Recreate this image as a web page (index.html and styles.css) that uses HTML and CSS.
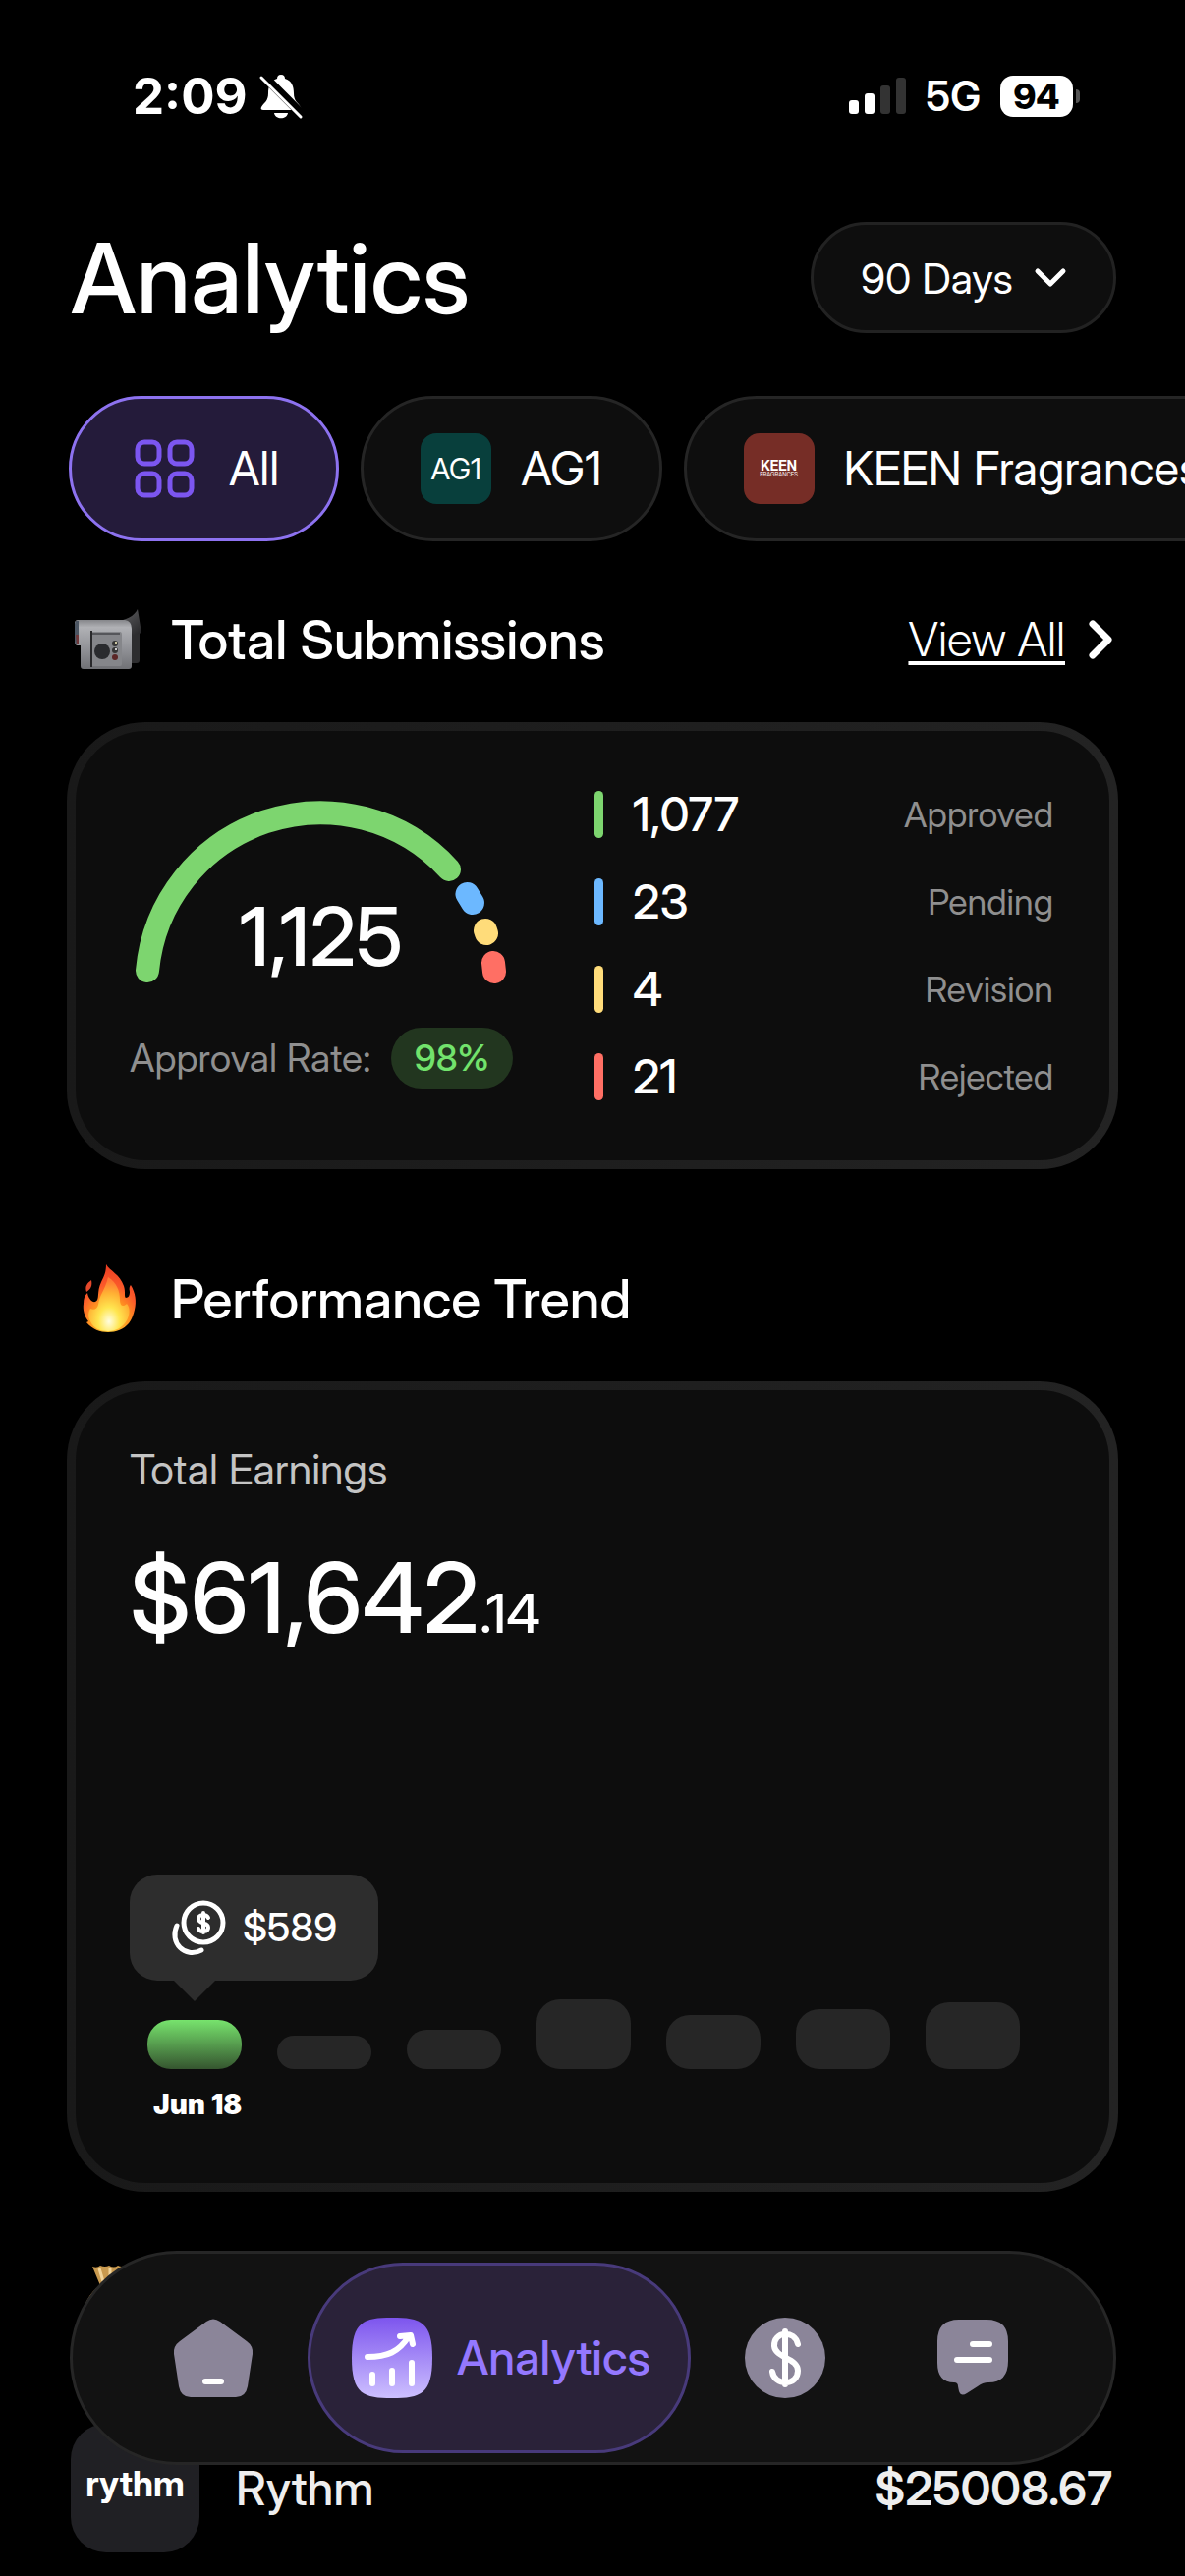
FILE: index.html
```html
<!DOCTYPE html>
<html lang="en">
<head>
<meta charset="utf-8">
<title>Analytics</title>
<meta name="viewport" content="width=device-width, initial-scale=1">
<link rel="stylesheet" href="styles.css">
</head>
<body>
<div class="status">
  <div class="status-group">
    <span class="clock">2:09</span>
    <svg class="bell" viewBox="0 0 44 46" aria-hidden="true">
      <path d="M22 1c3 0 4 2 4 4 7 2 9 8 9 15 0 8 4 9 7 14 1 2 0 3-2 3H4c-2 0-3-1-2-3 3-5 7-6 7-14 0-7 2-13 9-15 0-2 1-4 4-4z" fill="#fff"/>
      <path d="M15 40h14c-1 7-13 7-14 0z" fill="#fff"/>
      <path d="M3 1L44 42" stroke="#000" stroke-width="9"/>
      <path d="M2 4L42 44" stroke="#fff" stroke-width="3" stroke-linecap="round"/>
    </svg>
  </div>
  <div class="status-group status-right">
    <svg class="signal" viewBox="0 0 58 38" aria-hidden="true">
      <rect x="0" y="23" width="10" height="14" rx="3" fill="#fff"/>
      <rect x="16" y="16" width="10" height="21" rx="3" fill="#fff"/>
      <rect x="32" y="8" width="10" height="29" rx="3" fill="#333"/>
      <rect x="48" y="0" width="10" height="37" rx="3" fill="#333"/>
    </svg>
    <span class="network">5G</span>
    <span class="battery"><span class="battery-body">94</span><span class="battery-tip"></span></span>
  </div>
</div>

<main class="page">
  <header class="title-row">
    <h1 class="title">Analytics</h1>
    <button class="range" type="button">90 Days
      <svg class="range-icon" viewBox="0 0 32 20" aria-hidden="true"><path d="M3 3l13 13L29 3" fill="none" stroke="#fff" stroke-width="5" stroke-linecap="round" stroke-linejoin="round"/></svg>
    </button>
  </header>

  <div class="chips">
    <button class="chip chip-active" type="button">
      <svg class="chip-icon" viewBox="0 0 72 72" fill="none" stroke="#7c56f0" stroke-width="5" aria-hidden="true">
        <rect x="9" y="9" width="22" height="22" rx="7"/><rect x="42" y="9" width="22" height="22" rx="7"/>
        <rect x="9" y="41" width="22" height="22" rx="7"/><rect x="42" y="41" width="22" height="22" rx="7"/>
      </svg>All</button>
    <button class="chip" type="button"><span class="chip-icon brand-ag1" aria-hidden="true">AG1</span>AG1</button>
    <button class="chip" type="button"><span class="chip-icon brand-keen" aria-hidden="true"><b>KEEN</b><small>FRAGRANCES</small></span>KEEN Fragrances</button>
  </div>

  <section class="block">
    <div class="heading">
      <svg class="emoji" viewBox="2 0 88 80" aria-hidden="true">
        <defs>
          <linearGradient id="cam" x1="0" y1="0" x2="0" y2="1"><stop offset="0" stop-color="#85868a"/><stop offset=".15" stop-color="#b0b1b5"/><stop offset=".6" stop-color="#909196"/><stop offset="1" stop-color="#707175"/></linearGradient>
          <linearGradient id="hood" x1="0" y1="0" x2="1" y2="1"><stop offset="0" stop-color="#6b6b6e"/><stop offset="1" stop-color="#242426"/></linearGradient>
        </defs>
        <path d="M66 33h10v28q0 3-3 3h-7z" fill="#2d2d2f"/>
        <path d="M48 22c14-1 23-6 26-13l4 24-8 3-6-9z" fill="url(#hood)"/>
        <path d="M13 20h48q7 1 7 9v38q0 3-3 3H19q-3 0-3-3V46h-3q-3 0-3-5V24q0-4 3-4z" fill="url(#cam)"/>
        <path d="M11 21h3v24h-1q-3 0-3-4V24z" fill="#4c5663"/>
        <path d="M11 35h3v10h-2z" fill="#70383a"/>
        <path d="M27 32h29q2 0 2 3v30q0 2-2 2H27z" fill="#85868a"/>
        <path d="M26 31h2v37h-2z" fill="#29292b"/>
        <path d="M28 33h28v2H28z" fill="#55565a"/>
        <circle cx="38" cy="52" r="8" fill="#2a2b2e"/>
        <circle cx="51" cy="44" r="3" fill="#353535"/><circle cx="51" cy="51" r="3" fill="#353535"/><circle cx="51" cy="58" r="3" fill="#5b2626"/>
        <circle cx="52" cy="43" r="1" fill="#fff7c5"/><circle cx="52" cy="50" r="1" fill="#fff"/>
      </svg>
      <h2 class="heading-text">Total Submissions</h2>
      <a class="view-all" href="#submissions"><span class="view-all-text">View All</span>
        <svg class="view-all-icon" viewBox="0 0 24 40" aria-hidden="true"><path d="M4 4l16 16L4 36" fill="none" stroke="#fff" stroke-width="7" stroke-linecap="round" stroke-linejoin="round"/></svg>
      </a>
    </div>
    <div class="card submissions">
      <div class="gauge-col">
        <div class="gauge">
          <svg class="gauge-arc" viewBox="0 0 378 186" fill="none" stroke-width="24" stroke-linecap="round" aria-hidden="true">
            <path d="M12 172A177 177 0 0 1 319 69" stroke="#7dd56f"/>
            <path d="M337.500 94L343 103" stroke="#6cb8ff"/>
            <path d="M356 131L357 134" stroke="#ffdc7a"/>
            <path d="M364 164L365 173" stroke="#ff6f64"/>
          </svg>
          <span class="gauge-value">1,125</span>
        </div>
        <div class="rate">Approval Rate: <span class="rate-pill">98%</span></div>
      </div>
      <dl class="legend">
        <div class="legend-row legend-green"><dt>Approved</dt><dd>1,077</dd></div>
        <div class="legend-row legend-blue"><dt>Pending</dt><dd>23</dd></div>
        <div class="legend-row legend-yellow"><dt>Revision</dt><dd>4</dd></div>
        <div class="legend-row legend-red"><dt>Rejected</dt><dd>21</dd></div>
      </dl>
    </div>
  </section>

  <section class="block">
    <div class="heading">
      <svg class="emoji" viewBox="2 5 88 80" aria-hidden="true">
        <defs>
          <radialGradient id="fire" cx=".5" cy=".9" r=".85"><stop offset="0" stop-color="#ffd23a"/><stop offset=".45" stop-color="#ff9420"/><stop offset=".7" stop-color="#fb5a2a"/><stop offset="1" stop-color="#ee4023"/></radialGradient>
          <radialGradient id="core" cx=".5" cy=".82" r=".75"><stop offset="0" stop-color="#fffde0"/><stop offset=".35" stop-color="#ffe650"/><stop offset=".7" stop-color="#ffb234"/><stop offset="1" stop-color="#ff7a33"/></radialGradient>
        </defs>
        <path d="M42 10c4 7 14 10 18 22 2 6 0 11 2 12 3 0 4-3 4-6-1-4 0-6 1-7 5 8 6 17 4 25-1 5-3 9-4 11l-2 3C60 76 52 79 44 79S28 76 22 69l2-1c-4-5-6-12-5-18 0-5 1-8 4-11 1 6 5 10 8 9 5-2 1-10 6-20 3-6 5-10 5-18z" fill="url(#fire)"/>
        <path d="M27 26c1 5 0 9-5 12-2-6 1-9 5-12z" fill="#e4482b"/>
        <path d="M44 23c9 6 12 14 12 23 0 6 3 8 7 4 4 4 3 12 0 17-4 7-11 11-19 11s-15-3-18-10c-3-5-2-10 0-13 4 2 7 0 8-4 1-10 7-15 10-28z" fill="url(#core)"/>
      </svg>
      <h2 class="heading-text">Performance Trend</h2>
    </div>
    <div class="card trend">
      <p class="trend-label">Total Earnings</p>
      <p class="trend-value">$61,642<span class="trend-cents">.14</span></p>
      <div class="chart">
        <div class="bar bar-active" style="height:50px">
          <div class="tip">
            <svg class="tip-icon" viewBox="0 0 56 56" fill="none" stroke="#fff" stroke-width="5" stroke-linecap="round" aria-hidden="true">
              <circle cx="33" cy="23" r="20"/>
              <path d="M6 26C-2 43 14 60 31 51"/>
              <path d="M38 18c-2-4-10-4-10 1 0 6 10 3 10 9 0 5-9 5-10 1M33 13v20" stroke-width="4"/>
            </svg>$589</div>
          <span class="bar-label">Jun 18</span>
        </div>
        <div class="bar" style="height:34px"></div>
        <div class="bar" style="height:40px"></div>
        <div class="bar" style="height:71px"></div>
        <div class="bar" style="height:55px"></div>
        <div class="bar" style="height:61px"></div>
        <div class="bar" style="height:68px"></div>
      </div>
    </div>
  </section>

  <section class="block earners">
    <svg class="emoji" viewBox="0 0 88 80" aria-hidden="true">
      <path d="M26 12q5 2 8-1 5 2 9 0 5 3 9 0 4 2 7 0L50 36H36z" fill="#c99a4f"/>
      <path d="M33 14l6 20M44 13v21" stroke="#f2d49a" stroke-width="3"/>
      <path d="M30 34h22c14 10 22 22 18 34q-3 8-26 8t-26-8c-4-12 2-24 12-34z" fill="#b98a45"/>
    </svg>
    <div class="earner">
      <span class="earner-logo" aria-hidden="true">rythm</span>
      <span class="earner-name">Rythm</span>
      <span class="earner-amount">$25008.67</span>
    </div>
  </section>
</main>

<nav class="tabs">
  <a class="tab" href="#home" aria-label="Home">
    <svg class="tab-icon" viewBox="0 0 82 82" aria-hidden="true"><path d="M34 4q7-5 14 0l27 20q7 5 6 13l-5 33q-2 11-12 11H18Q8 81 6 70L1 37q-1-8 6-13z" fill="#8b8599"/><path d="M33 65h16" stroke="#fff" stroke-width="6" stroke-linecap="round"/></svg>
  </a>
  <a class="tab tab-active" href="#analytics" aria-current="page">
    <svg class="tab-icon" viewBox="0 0 82 82" aria-hidden="true">
      <defs><linearGradient id="tabfill" x1="0" y1="0" x2="0" y2="1"><stop offset="0" stop-color="#7d55ee"/><stop offset="1" stop-color="#cdc0ff"/></linearGradient></defs>
      <path d="M41 0C70 0 82 4 82 41S70 82 41 82 0 78 0 41 12 0 41 0z" fill="url(#tabfill)"/>
      <g fill="none" stroke="#fff" stroke-width="6" stroke-linecap="round" stroke-linejoin="round"><path d="M16 40c20 0 32-5 42-21M49 19l11-1 2 9"/><path d="M21 58v9M41 54v13M61 46v21"/></g>
    </svg>Analytics</a>
  <a class="tab" href="#earnings" aria-label="Earnings">
    <svg class="tab-icon" viewBox="0 0 82 82" aria-hidden="true"><circle cx="41" cy="41" r="41" fill="#8b8599"/><path d="M54 27C51 12 29 14 30 29c1 12 24 12 24 25 0 16-24 16-26 1M41 14v54" fill="none" stroke="#fff" stroke-width="6" stroke-linecap="round"/></svg>
  </a>
  <a class="tab" href="#messages" aria-label="Messages">
    <svg class="tab-icon" viewBox="0 0 82 82" aria-hidden="true"><path d="M5 24Q5 2 27 2h28q22 0 22 22v20q0 22-20 22-6 0-11 4L35 77q-6 4-8-2l-1-5q0-4-4-4Q5 66 5 46z" fill="#8b8599"/><path d="M41 27h17M25 43h33" stroke="#fff" stroke-width="6" stroke-linecap="round"/></svg>
  </a>
</nav>
</body>
</html>
```
FILE: styles.css
```css
* { box-sizing: border-box; }

body {
  margin: 0;
  min-height: 100vh;
  background: #000;
  color: #fff;
  font-family: "Inter Display", Inter, "Liberation Sans", sans-serif;
  font-size: 48px;
  font-variation-settings: "opsz" 32;
  line-height: 60px;
  overflow: hidden;
}

h1, h2, p, dl, dd { margin: 0; font-weight: 500; }
button { font: inherit; font-variation-settings: inherit; color: inherit; }
a { color: inherit; text-decoration: none; }
svg { display: block; flex: none; overflow: visible; }

/* Status bar */
.status {
  display: flex;
  justify-content: space-between;
  align-items: center;
  height: 196px;
  padding: 0 107px 0 135px;
}
.status-group { display: flex; align-items: center; gap: 12px; }
.status-right { gap: 20px; }
.clock { font-family: Inter, sans-serif; font-size: 51px; font-variation-settings: "opsz" 14; font-weight: 700; }
.bell { width: 44px; height: 46px; }
.signal { width: 58px; height: 38px; }
.network { font-size: 42px; font-weight: 600; }
.battery { display: flex; align-items: center; gap: 3px; }
.battery-body {
  width: 74px;
  height: 42px;
  border-radius: 13px;
  background: #fff;
  color: #000;
  font-size: 36px;
  font-weight: 800;
  line-height: 42px;
  text-align: center;
}
.battery-tip { width: 4px; height: 14px; border-radius: 0 4px 4px 0; background: #555; }

/* Page */
.page { padding: 30px 68px 0; }

.title-row { display: flex; justify-content: space-between; align-items: center; padding: 0 2px 0 4px; }
.title { font-size: 99px; line-height: 112px; }
.range {
  display: flex;
  align-items: center;
  gap: 22px;
  height: 113px;
  padding: 0 48px;
  border: 3px solid #222;
  border-radius: 57px;
  background: #0e0e0e;
  font-size: 43px;
}
.range-icon { width: 32px; height: 20px; }

.chips { display: flex; gap: 22px; margin: 64px -68px 0 0; padding-left: 2px; overflow: hidden; }
.chip {
  display: flex;
  flex: none;
  align-items: center;
  gap: 30px;
  height: 148px;
  padding: 0 58px;
  border: 3px solid #252525;
  border-radius: 74px;
  background: #0e0e0e;
}
.chip-active { border-color: #8d72f0; background: #241b3a; }
.chip-icon { width: 72px; height: 72px; border-radius: 16px; }
.brand-ag1 { background: #083f3c; font-size: 30px; line-height: 72px; text-align: center; }
.brand-keen {
  display: flex;
  flex-direction: column;
  align-items: center;
  justify-content: center;
  background: #762d26;
  font-size: 14px;
  line-height: 12px;
}
.brand-keen small { font-size: 6px; line-height: 6px; }

/* Sections */
.heading { display: flex; align-items: center; height: 88px; margin-bottom: 40px; }
.emoji { width: 88px; height: 80px; }
.heading-text { margin-left: 18px; font-size: 55px; }
.block { padding-top: 56px; }
.block + .block { padding-top: 88px; }
.view-all { display: flex; align-items: center; gap: 24px; margin: 0 6px 0 auto; font-weight: 300; }
.view-all-text { text-decoration: underline; text-decoration-thickness: 4px; text-underline-offset: 5px; }
.view-all-icon { width: 24px; height: 40px; }

.card {
  border: 9px solid transparent;
  border-radius: 80px;
  background:
    linear-gradient(#0d0d0d, #0d0d0d) padding-box,
    linear-gradient(90deg, #191919, #232323) border-box;
}

/* Submissions */
.submissions { display: flex; padding: 61px 57px 61px 55px; }
.gauge-col { width: 390px; padding-top: 11px; }
.gauge { position: relative; width: 378px; margin-left: 6px; }
.gauge-arc { width: 378px; height: 186px; }
.gauge-value { position: absolute; inset: auto 0 12px; font-size: 82px; font-weight: 500; line-height: 72px; text-align: center; }
.rate { display: flex; align-items: center; justify-content: space-between; margin-top: 44px; color: #8f8f8f; font-size: 39px; white-space: nowrap; }
.rate-pill { padding: 0 24px; border-radius: 31px; background: #22361f; color: #72e36c; font-size: 37px; font-weight: 500; line-height: 62px; }
.legend { display: flex; flex: 1; flex-direction: column; gap: 41px; margin-left: 83px; }
.legend-row { display: flex; flex-direction: row-reverse; align-items: center; justify-content: space-between; height: 48px; }
.legend-row dt { color: #8f8f8f; font-size: 36px; font-weight: 400; }
.legend-row dd { display: flex; align-items: center; gap: 30px; }
.legend-row dd::before { content: ""; width: 9px; height: 48px; border-radius: 5px; background: var(--mark); }
.legend-green { --mark: #7dd56f; }
.legend-blue { --mark: #6cb8ff; }
.legend-yellow { --mark: #ffdc7a; }
.legend-red { --mark: #ff6f64; }

/* Trend */
.trend { padding: 50px 55px 116px; }
.trend-label { color: #c4c4c4; font-size: 43px; font-weight: 400; }
.trend-value { margin-top: 41px; font-size: 99px; line-height: 120px; }
.trend-cents { font-size: 55px; }
.chart { display: flex; align-items: flex-end; gap: 36px; height: 404px; padding-left: 18px; }
.bar { position: relative; width: 96px; border-radius: 24px; background: #262626; }
.bar-active { background: linear-gradient(#77e36d, #35552f); }
.tip {
  position: absolute;
  bottom: 90px;
  left: -18px;
  display: flex;
  align-items: center;
  gap: 17px;
  height: 108px;
  padding: 0 42px;
  border-radius: 28px;
  background: #2d2d2d;
  font-size: 40px;
  font-weight: 500;
}
.tip::after {
  content: "";
  position: absolute;
  top: 107px;
  left: 44px;
  border: 22px solid transparent;
  border-top-color: #2d2d2d;
  border-bottom: 0;
}
.tip-icon { width: 56px; height: 56px; }
.bar-label {
  position: absolute;
  top: 70px;
  left: 6px;
  font-family: Inter, sans-serif;
  font-size: 28px;
  font-variation-settings: "opsz" 14;
  font-weight: 900;
  line-height: 32px;
  white-space: nowrap;
}

/* Earners */
.block.earners { padding: 64px 0 0; }
.earner { display: flex; align-items: center; gap: 37px; margin-top: 92px; padding: 0 6px 0 4px; }
.earner-logo { width: 131px; height: 131px; border-radius: 36px; background: #202024; font-size: 36px; font-weight: 700; line-height: 122px; text-align: center; }
.earner-name, .earner-amount { color: #eee; font-weight: 500; }
.earner-amount { margin-left: auto; font-weight: 600; }

/* Tab bar */
.tabs {
  position: fixed;
  right: 70px;
  bottom: 113px;
  left: 71px;
  display: flex;
  align-items: center;
  justify-content: space-between;
  height: 218px;
  padding: 0 48px;
  border: 3px solid #262626;
  border-radius: 109px;
  background: #121212;
}
.tab { display: flex; align-items: center; justify-content: center; padding: 0 54px; }
.tab-icon { width: 82px; height: 82px; }
.tab-active { gap: 25px; height: 194px; padding: 0 38px 0 42px; border: 3px solid #483a7b; border-radius: 97px; background: #2a2239; color: #9478ff; font-weight: 500; }
```
